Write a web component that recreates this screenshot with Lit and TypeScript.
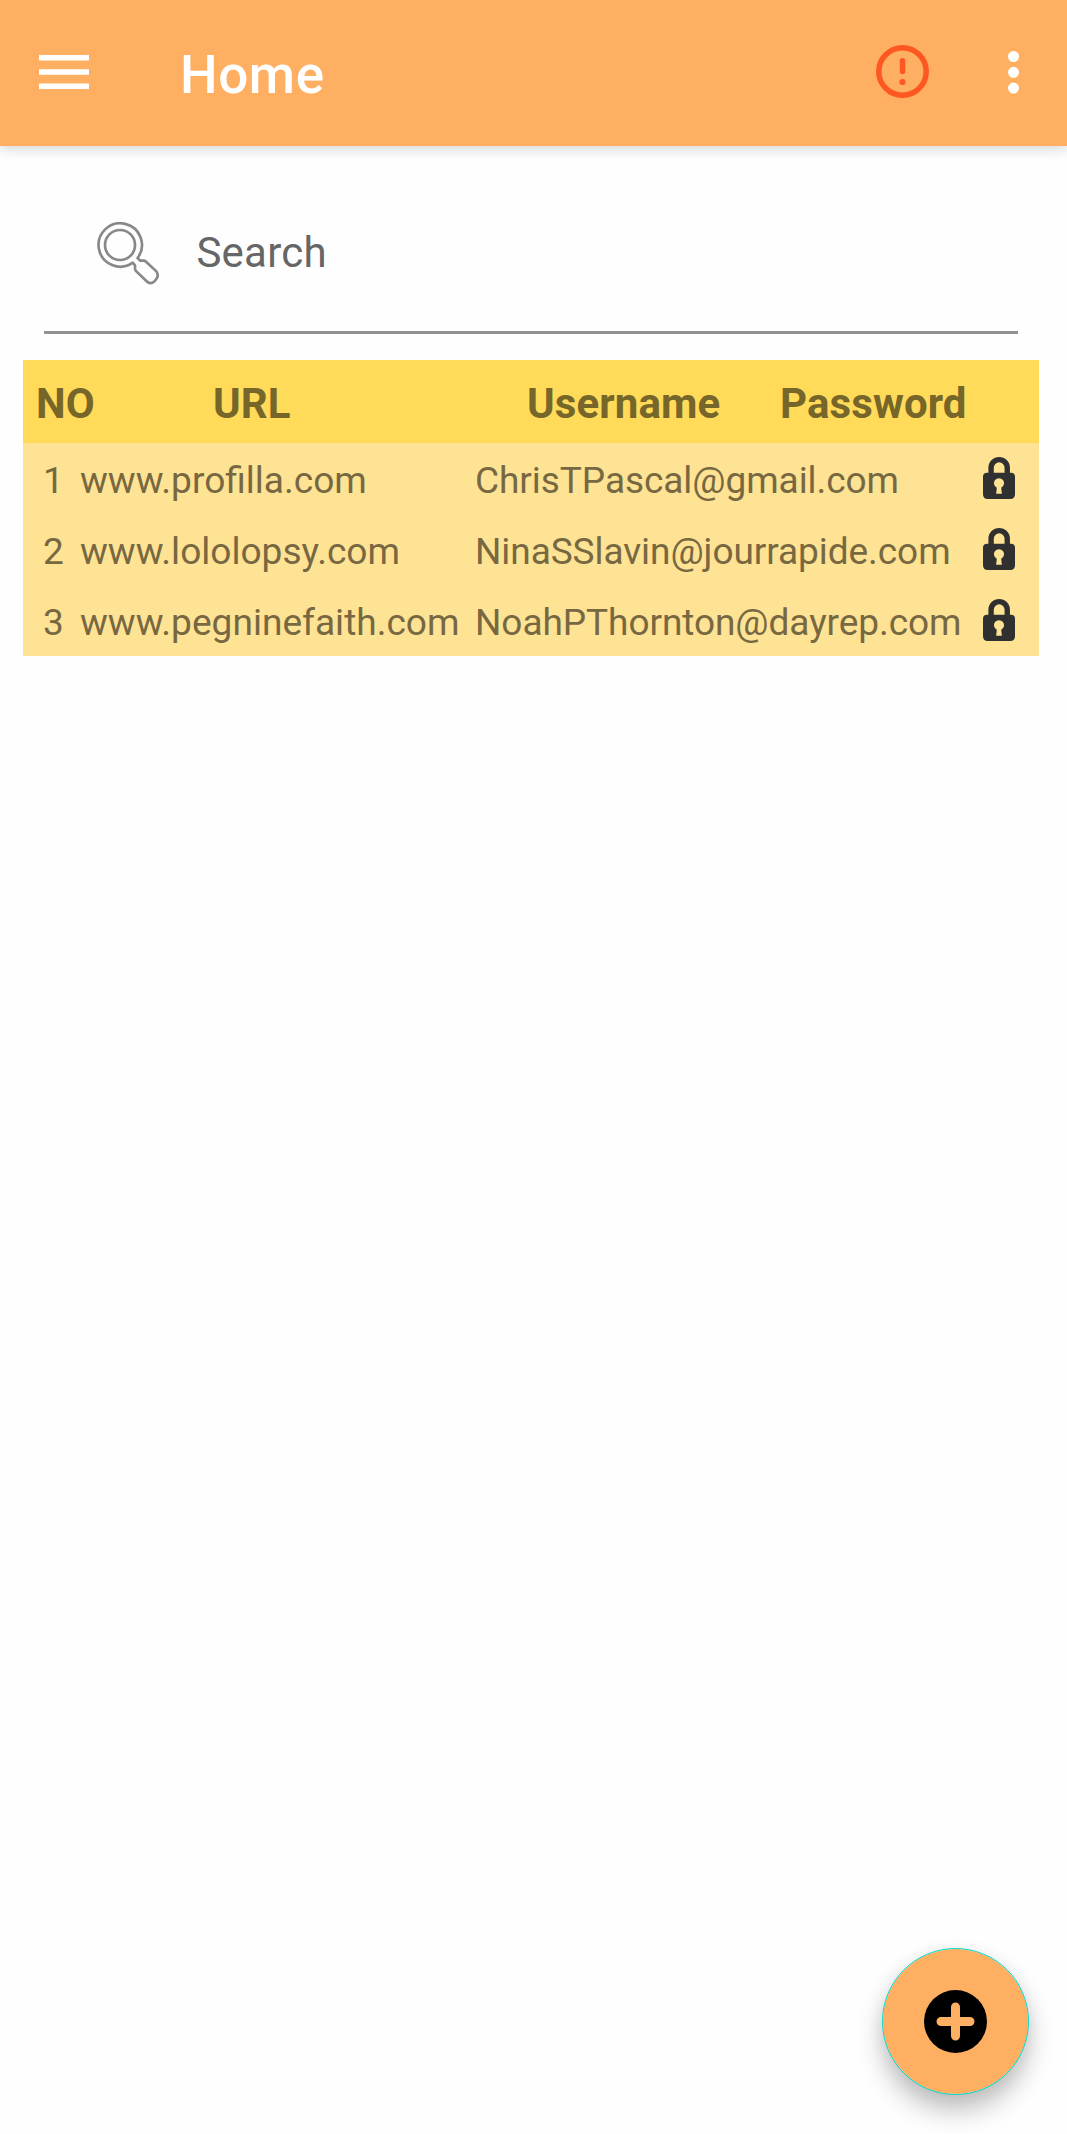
import { LitElement, html, css } from "lit";
import { customElement, property } from "lit/decorators.js";

interface Entry {
  no: number;
  url: string;
  username: string;
}

const ENTRIES: Entry[] = [
  { no: 1, url: "www.profilla.com", username: "ChrisTPascal@gmail.com" },
  { no: 2, url: "www.lololopsy.com", username: "NinaSSlavin@jourrapide.com" },
  { no: 3, url: "www.pegninefaith.com", username: "NoahPThornton@dayrep.com" },
];

@customElement("app-header")
class AppHeader extends LitElement {
  @property() heading = "";

  static styles = css`
    :host {
      display: flex;
      align-items: center;
      box-sizing: border-box;
      height: 146px;
      padding: 0 48px 0 39px;
      background: #ffaf62;
      box-shadow: 0 3px 12px rgba(0, 0, 0, 0.16);
    }
    svg {
      display: block;
      flex: none;
      margin-top: -2px;
    }
    .title {
      flex: 1;
      margin: 0;
      padding: 3px 0 0 91px;
      color: #fff;
      font-size: 53px;
      line-height: 62px;
      font-weight: 500;
      letter-spacing: 0.6px;
    }
    .alert {
      margin: -3px 79px 0 0;
    }
  `;

  render() {
    return html`
      <svg width="50" height="34" viewBox="0 0 50 34" fill="#fff">
        <path d="M0 0h50v5.6H0zM0 14.2h50v5.6H0zM0 28.4h50V34H0z" />
      </svg>
      <h1 class="title">${this.heading}</h1>
      <svg class="alert" width="53" height="53" viewBox="0 0 53 53">
        <circle cx="26.5" cy="26.5" r="23.7" fill="none" stroke="#ff5722" stroke-width="5.5" />
        <path d="M26.5 15.6v10.8" stroke="#ff5722" stroke-width="5.4" stroke-linecap="round" />
        <circle cx="26.5" cy="37" r="3.1" fill="#ff5722" />
      </svg>
      <svg width="11" height="43" viewBox="0 0 11 43" fill="#fff">
        <circle cx="5.5" cy="5.5" r="5.5" />
        <circle cx="5.5" cy="21.3" r="5.5" />
        <circle cx="5.5" cy="37.1" r="5.5" />
      </svg>
    `;
  }
}

@customElement("search-field")
class SearchField extends LitElement {
  static styles = css`
    :host {
      display: flex;
      align-items: center;
      box-sizing: border-box;
      height: 156px;
      margin: 32px 49px 0 44px;
      padding: 0 53px 4px;
      border-bottom: 3px solid #909190;
    }
    svg {
      display: block;
      flex: none;
      margin-top: 3px;
    }
    .hint {
      margin-left: 36px;
      color: #666;
      font-size: 42px;
      line-height: 50px;
      letter-spacing: 0.25px;
    }
  `;

  render() {
    return html`
      <svg width="63.4" height="63.4" viewBox="36 36 190 190" fill="none" stroke="#888" stroke-width="8" stroke-linejoin="round">
        <circle cx="105" cy="105" r="45" />
        <path d="M157.5 144A65 65 0 1 0 143 158L150 166V178Q151 181 154 184L184 213Q196 225 208 214L212 209Q223 198 214 184L183 155Q180 152 176 152H166Z" />
      </svg>
      <span class="hint">Search</span>
    `;
  }
}

@customElement("entry-table")
class EntryTable extends LitElement {
  @property({ attribute: false }) entries: Entry[] = [];

  static styles = css`
    :host {
      display: block;
      margin: 26px 28px 0 23px;
      color: #776842;
      background: #ffe394;
    }
    .row {
      display: grid;
      align-items: center;
      box-sizing: border-box;
      white-space: nowrap;
    }
    .head {
      grid-template-columns: 177px 314px 253px 1fr;
      height: 83px;
      padding: 4px 0 0 13px;
      color: #776629;
      background: #ffdb59;
      font-size: 42px;
      line-height: 50px;
      font-weight: 700;
      letter-spacing: 0.12px;
    }
    .entry {
      grid-template-columns: 37px 395px 508px 1fr;
      height: 71px;
      padding-left: 20px;
      font-size: 37px;
      line-height: 44px;
    }
    .text {
      padding-top: 5px;
    }
    .url {
      font-size: 37.1px;
    }
    .user {
      letter-spacing: -0.06px;
    }
    svg {
      display: block;
      margin-top: -2px;
    }
  `;

  render() {
    return html`
      <div class="row head">
        <span>NO</span><span>URL</span><span>Username</span><span>Password</span>
      </div>
      ${this.entries.map(
        (e) => html`
          <div class="row entry">
            <span class="text">${e.no}</span>
            <span class="text url">${e.url}</span>
            <span class="text user">${e.username}</span>
            <svg width="32" height="42" viewBox="69 51 95 126" preserveAspectRatio="none">
              <path d="M93 102V83a24 24 0 0 1 48 0V102" fill="none" stroke="#303030" stroke-width="16" />
              <path
                fill="#303030"
                fill-rule="evenodd"
                d="M81 98H152Q164 98 164 110V163Q164 177 150 177H83Q69 177 69 163V110Q69 98 81 98ZM110 143L108 161H125L123 143A15 15 0 1 0 110 143Z"
              />
            </svg>
          </div>
        `
      )}
    `;
  }
}

@customElement("app-root")
class AppRoot extends LitElement {
  static styles = css`
    :host {
      display: block;
      position: relative;
      box-sizing: border-box;
      height: 2134px;
      overflow: hidden;
      background: #fefefe;
      font-family: Roboto, "Liberation Sans", sans-serif;
    }
    .fab {
      position: absolute;
      right: 38px;
      bottom: 39px;
      display: grid;
      place-items: center;
      box-sizing: border-box;
      width: 147px;
      height: 147px;
      padding: 0;
      border: 1.5px solid #03dac5;
      border-radius: 50%;
      background: #ffaf62;
      background-clip: padding-box;
      box-shadow: 0 16px 26px rgba(0, 0, 0, 0.24), 0 2px 16px rgba(0, 0, 0, 0.06);
    }
    .fab svg {
      display: block;
    }
  `;

  render() {
    return html`
      <app-header heading="Home"></app-header>
      <search-field></search-field>
      <entry-table .entries=${ENTRIES}></entry-table>
      <button class="fab" aria-label="Add">
        <svg width="63" height="63" viewBox="0 0 63 63">
          <circle cx="31.5" cy="31.5" r="31.5" />
          <path d="M31.5 17v29M17 31.5h29" stroke="#ffaf62" stroke-width="9" stroke-linecap="round" />
        </svg>
      </button>
    `;
  }
}
